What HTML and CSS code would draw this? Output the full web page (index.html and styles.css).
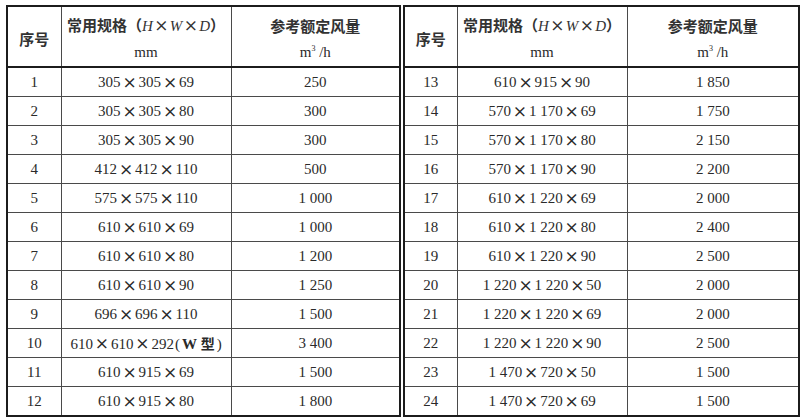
FILE: index.html
```html
<!DOCTYPE html>
<html lang="zh">
<head>
<meta charset="utf-8">
<title>规格表</title>
<link rel="stylesheet" href="styles.css">
</head>
<body>
<div class="sheet">
  <table class="spec left">
    <colgroup><col class="c-no"><col class="c-size"><col class="c-flow"></colgroup>
    <thead>
      <tr>
        <th class="hd-no">序号</th>
        <th><div class="cn">常用规格（<i>H</i><span class="x">×</span><i>W</i><span class="x">×</span><i>D</i>）</div><div class="unit">mm</div></th>
        <th><div class="cn">参考额定风量</div><div class="unit">m<sup>3</sup> /h</div></th>
      </tr>
    </thead>
    <tbody>
      <tr><td>1</td><td>305<span class="x">×</span>305<span class="x">×</span>69</td><td>250</td></tr>
      <tr><td>2</td><td>305<span class="x">×</span>305<span class="x">×</span>80</td><td>300</td></tr>
      <tr><td>3</td><td>305<span class="x">×</span>305<span class="x">×</span>90</td><td>300</td></tr>
      <tr><td>4</td><td>412<span class="x">×</span>412<span class="x">×</span>110</td><td>500</td></tr>
      <tr><td>5</td><td>575<span class="x">×</span>575<span class="x">×</span>110</td><td>1 000</td></tr>
      <tr><td>6</td><td>610<span class="x">×</span>610<span class="x">×</span>69</td><td>1 000</td></tr>
      <tr><td>7</td><td>610<span class="x">×</span>610<span class="x">×</span>80</td><td>1 200</td></tr>
      <tr><td>8</td><td>610<span class="x">×</span>610<span class="x">×</span>90</td><td>1 250</td></tr>
      <tr><td>9</td><td>696<span class="x">×</span>696<span class="x">×</span>110</td><td>1 500</td></tr>
      <tr><td>10</td><td>610<span class="x">×</span>610<span class="x">×</span>292<span class="type">(<b>W</b> <span class="cn">型</span>)</span></td><td>3 400</td></tr>
      <tr><td>11</td><td>610<span class="x">×</span>915<span class="x">×</span>69</td><td>1 500</td></tr>
      <tr><td>12</td><td>610<span class="x">×</span>915<span class="x">×</span>80</td><td>1 800</td></tr>
    </tbody>
  </table>
  <table class="spec right">
    <colgroup><col class="c-no"><col class="c-size"><col class="c-flow"></colgroup>
    <thead>
      <tr>
        <th class="hd-no">序号</th>
        <th><div class="cn">常用规格（<i>H</i><span class="x">×</span><i>W</i><span class="x">×</span><i>D</i>）</div><div class="unit">mm</div></th>
        <th><div class="cn">参考额定风量</div><div class="unit">m<sup>3</sup> /h</div></th>
      </tr>
    </thead>
    <tbody>
      <tr><td>13</td><td>610<span class="x">×</span>915<span class="x">×</span>90</td><td>1 850</td></tr>
      <tr><td>14</td><td>570<span class="x">×</span>1 170<span class="x">×</span>69</td><td>1 750</td></tr>
      <tr><td>15</td><td>570<span class="x">×</span>1 170<span class="x">×</span>80</td><td>2 150</td></tr>
      <tr><td>16</td><td>570<span class="x">×</span>1 170<span class="x">×</span>90</td><td>2 200</td></tr>
      <tr><td>17</td><td>610<span class="x">×</span>1 220<span class="x">×</span>69</td><td>2 000</td></tr>
      <tr><td>18</td><td>610<span class="x">×</span>1 220<span class="x">×</span>80</td><td>2 400</td></tr>
      <tr><td>19</td><td>610<span class="x">×</span>1 220<span class="x">×</span>90</td><td>2 500</td></tr>
      <tr><td>20</td><td>1 220<span class="x">×</span>1 220<span class="x">×</span>50</td><td>2 000</td></tr>
      <tr><td>21</td><td>1 220<span class="x">×</span>1 220<span class="x">×</span>69</td><td>2 000</td></tr>
      <tr><td>22</td><td>1 220<span class="x">×</span>1 220<span class="x">×</span>90</td><td>2 500</td></tr>
      <tr><td>23</td><td>1 470<span class="x">×</span>720<span class="x">×</span>50</td><td>1 500</td></tr>
      <tr><td>24</td><td>1 470<span class="x">×</span>720<span class="x">×</span>69</td><td>1 500</td></tr>
    </tbody>
  </table>
</div>
</body>
</html>
```
FILE: styles.css
```css
html, body {
  margin: 0;
  padding: 0;
  background: #ffffff;
}

.sheet {
  display: flex;
  gap: 2px;
  padding: 5px 0 0 6px;
}

.spec {
  border-collapse: collapse;
  table-layout: fixed;
  border: 2px solid #1c1c1c;
  font-family: "Liberation Serif", "Noto Sans CJK SC", serif;
  font-size: 15px;
  color: #2a2a2a;
}

.spec.left { width: 393px; }
.spec.right { width: 395px; }

.left .c-no { width: 54px; }
.left .c-size { width: 170px; }
.left .c-flow { width: 169px; }

.right .c-no { width: 53px; }
.right .c-size { width: 170px; }
.right .c-flow { width: 172px; }

.spec th {
  height: 55px;
  padding: 4px 0 0;
  font-weight: normal;
  border: 1px solid #4a4a4a;
  border-bottom: 2px solid #1c1c1c;
  vertical-align: middle;
  text-align: center;
  line-height: 26px;
}

.spec th .cn {
  font-family: "Noto Sans CJK SC", sans-serif;
  font-weight: 700;
  font-size: 15px;
  color: #333333;
}

.spec th .cn i {
  font-family: "Liberation Serif", serif;
  font-style: italic;
  font-weight: normal;
  font-size: 15px;
}

.spec th .cn .x {
  font-weight: normal;
  width: 17px;
  line-height: 26px;
}

.spec .hd-no {
  font-family: "Noto Sans CJK SC", sans-serif;
  font-weight: 700;
  color: #333333;
}

.spec .unit {
  font-family: "Liberation Serif", serif;
  font-size: 15px;
}

.spec sup {
  font-size: 8px;
  vertical-align: 6px;
  line-height: 0;
}

.spec td {
  height: 28px;
  padding: 0;
  border: 1px solid #4a4a4a;
  text-align: center;
  vertical-align: middle;
  line-height: 18px;
}

.x {
  display: inline-block;
  width: 18px;
  text-align: center;
  font-family: "DejaVu Serif", "Liberation Serif", serif;
  font-size: 17px;
  line-height: 18px;
  vertical-align: top;
}

.type {
  margin-left: 1px;
}

.type b {
  font-weight: 700;
  margin-left: 2px;
}

.type .cn {
  font-family: "Noto Sans CJK SC", sans-serif;
  font-weight: 700;
  font-size: 14px;
  margin-right: 2px;
}
```
